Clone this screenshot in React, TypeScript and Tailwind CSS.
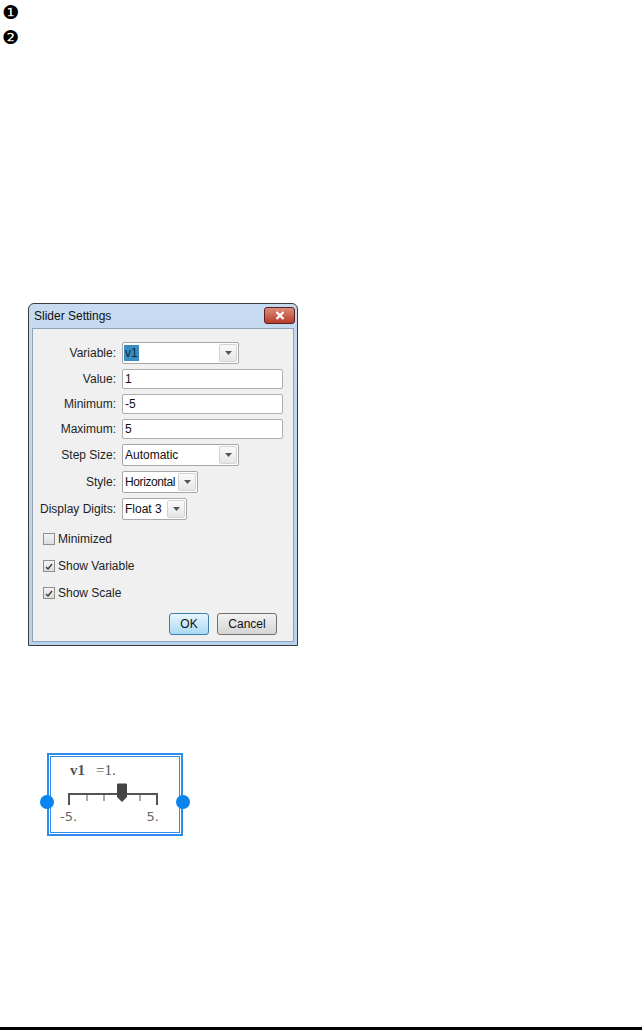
import React from "react";

const ui = { fontFamily: '"Liberation Sans", Arial, sans-serif' };

function Label({ children }: { children: React.ReactNode }) {
  return (
    <div className="w-[89px] shrink-0 pr-[6px] text-right text-[12px] whitespace-nowrap text-[#1e1e1e]">
      {children}
    </div>
  );
}

function TextBox({ value }: { value: string }) {
  return (
    <div className="flex h-[20px] w-[161px] items-center rounded-[2px] border border-[#abadb3] bg-white pl-[2px] text-[12px] text-[#111]">
      {value}
    </div>
  );
}

function Arrow() {
  return (
    <svg width="7" height="4" viewBox="0 0 7 4">
      <path d="M0 0h7L3.5 4z" fill="#555" />
    </svg>
  );
}

function Dropdown({
  value,
  width,
  selected,
  tight,
}: {
  value: string;
  width: string;
  selected?: boolean;
  tight?: boolean;
}) {
  return (
    <div
      className={`flex h-[22px] ${width} items-stretch rounded-[2px] border border-[#a7a7a7] bg-white text-[12px] text-[#111]`}
    >
      <div className="flex flex-1 items-center overflow-hidden pl-[1px]">
        {selected ? (
          <span className="bg-[#3a8dc2] px-[1px] leading-[16px] text-[#10283a]">
            {value}
          </span>
        ) : (
          <span className={`pl-[1px] whitespace-nowrap ${tight ? "tracking-[-0.4px]" : ""}`}>
            {value}
          </span>
        )}
      </div>
      <div className="m-[1px] flex w-[18px] shrink-0 items-center justify-center rounded-[2px] border border-[#d4d4d4] bg-gradient-to-b from-[#fafafa] to-[#e6e6e6]">
        <Arrow />
      </div>
    </div>
  );
}

function Check({ checked, label }: { checked: boolean; label: string }) {
  return (
    <div className="flex h-[14px] items-center gap-[3px] text-[12px] text-[#1e1e1e]">
      <div className="flex h-[12px] w-[12px] items-center justify-center border border-[#8f8f8f] bg-gradient-to-b from-[#f4f4f4] to-[#dcdcdc]">
        {checked && (
          <svg width="8" height="7" viewBox="0 0 8 7">
            <path d="M1 4l2 2 4-5" fill="none" stroke="#3b3b3b" strokeWidth="1.4" />
          </svg>
        )}
      </div>
      <span>{label}</span>
    </div>
  );
}

function Button({ children, width, focus }: { children: React.ReactNode; width: string; focus?: boolean }) {
  return (
    <div
      className={`flex h-[22px] ${width} items-center justify-center rounded-[3px] border text-[12px] text-[#111] ${
        focus
          ? "border-[#3c7fb1] bg-gradient-to-b from-[#eaf6fd] to-[#a7d9f5]"
          : "border-[#707070] bg-gradient-to-b from-[#f2f2f2] to-[#d4d4d4]"
      }`}
    >
      {children}
    </div>
  );
}

function SliderSettings() {
  return (
    <div
      className="ml-[28px] mt-[303px] flex h-[343px] w-[270px] flex-col rounded-t-[6px] border border-[#3a3a3a] bg-gradient-to-b from-[#c6daf0] to-[#b9d1ea]"
      style={ui}
    >
      <div className="flex h-[24px] items-center justify-between pl-[5px] pr-[2px]">
        <span className="text-[12px] text-[#111]">Slider Settings</span>
        <div className="mt-[-2px] flex h-[17px] w-[31px] items-center justify-center rounded-[3px] border border-[#5a2020] bg-gradient-to-b from-[#dc8c7e] to-[#b83a2a]">
          <svg width="10" height="9" viewBox="0 0 10 9">
            <path d="M1.5 1l7 7M8.5 1l-7 7" stroke="#fff" strokeWidth="2.2" />
          </svg>
        </div>
      </div>
      <div className="mx-[3px] mb-[3px] flex flex-1 flex-col border border-[#8ea4bf] bg-[#f0f0f0] pt-[13px]">
        <div className="flex flex-col gap-[5px]">
          <div className="flex items-center">
            <Label>Variable:</Label>
            <Dropdown value="v1" width="w-[117px]" selected />
          </div>
          <div className="flex items-center">
            <Label>Value:</Label>
            <TextBox value="1" />
          </div>
          <div className="flex items-center">
            <Label>Minimum:</Label>
            <TextBox value="-5" />
          </div>
          <div className="flex items-center">
            <Label>Maximum:</Label>
            <TextBox value="5" />
          </div>
          <div className="flex items-center">
            <Label>Step Size:</Label>
            <Dropdown value="Automatic" width="w-[117px]" />
          </div>
          <div className="flex items-center">
            <Label>Style:</Label>
            <Dropdown value="Horizontal" width="w-[76px]" tight />
          </div>
          <div className="flex items-center">
            <Label>Display Digits:</Label>
            <Dropdown value="Float 3" width="w-[65px]" />
          </div>
        </div>
        <div className="mt-[12px] flex flex-col gap-[13px] pl-[10px]">
          <Check checked={false} label="Minimized" />
          <Check checked label="Show Variable" />
          <Check checked label="Show Scale" />
        </div>
        <div className="mt-[13px] flex justify-end gap-[8px] pr-[16px]">
          <Button width="w-[40px]" focus>
            OK
          </Button>
          <Button width="w-[60px]">Cancel</Button>
        </div>
      </div>
    </div>
  );
}

function SliderWidget() {
  const ticks = [18, 36, 53, 71, 89, 106];
  return (
    <div className="relative ml-[47px] mt-[107px] h-[83px] w-[136px] border-2 border-[#2e8cea] p-[1px]">
      <div className="h-full w-full border border-[#2e8cea] bg-white">
        <div className="flex items-baseline pl-[19px] pt-[2px] text-[#555]" style={{ fontFamily: '"Liberation Serif", serif' }}>
          <span className="text-[15px] font-bold">v1</span>
          <span className="ml-[11px] text-[15px]">=1.</span>
        </div>
        <svg width="128" height="26" viewBox="0 0 128 26" className="mt-[1px] block">
          <rect x="17" y="10" width="90" height="2" fill="#555" />
          {ticks.map((x, i) => (
            <rect
              key={x}
              x={x - (i === 0 || i === ticks.length - 1 ? 1 : 0.5)}
              y="10"
              width={i === 0 || i === ticks.length - 1 ? 2 : 1}
              height={i === 0 || i === ticks.length - 1 ? 12 : 8}
              fill="#555"
            />
          ))}
          <path d="M66 1.5a1 1 0 0 1 1-1h8a1 1 0 0 1 1 1V14l-5 5-5-5z" fill="#444" />
        </svg>
        <div className="flex justify-between pl-[9px] pr-[20px] text-[13px] leading-[16px] text-[#666]" style={{ fontFamily: '"DejaVu Sans", sans-serif' }}>
          <span>-5.</span>
          <span>5.</span>
        </div>
      </div>
      <div className="absolute left-[-9px] top-[40px] h-[14px] w-[14px] rounded-full bg-[#0b84ee]" />
      <div className="absolute right-[-9px] top-[40px] h-[14px] w-[14px] rounded-full bg-[#0b84ee]" />
    </div>
  );
}

export default function App() {
  return (
    <div className="flex h-[1030px] w-[642px] flex-col bg-white">
      <div className="flex flex-col pl-[2px] text-[19px] leading-[25px] text-black" style={{ fontFamily: '"DejaVu Sans", sans-serif' }}>
        <span>❶</span>
        <span>❷</span>
      </div>
      <div className="-mt-[50px]">
        <SliderSettings />
        <SliderWidget />
      </div>
      <div className="mt-auto h-[3px] w-full bg-black" />
    </div>
  );
}
